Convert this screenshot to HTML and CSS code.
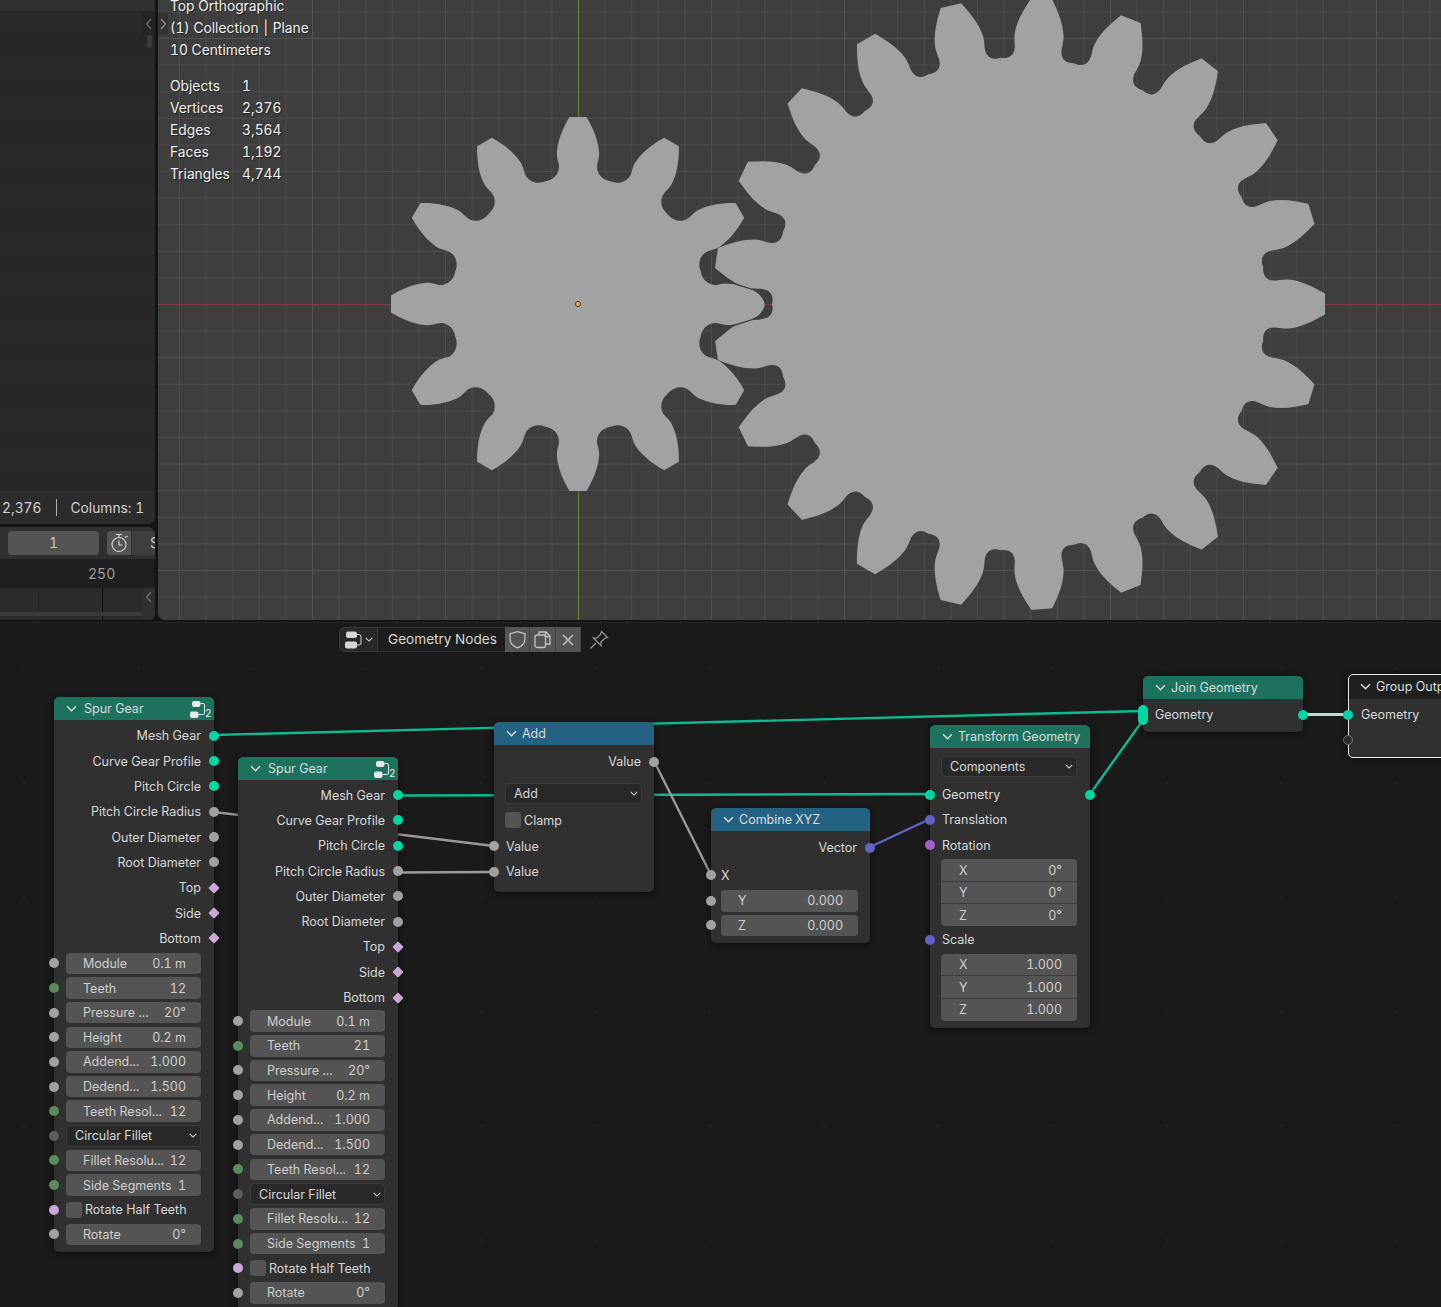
FILE: index.html
```html
<!DOCTYPE html>
<html lang="en">
<head>
    <meta charset="UTF-8">
    <title>Geometry Nodes</title>
    <link rel="stylesheet" href="styles.css">
</head>
<body>
    <svg class="defs" width="0" height="0">
        <symbol id="i-chev" viewBox="0 0 10 6"><polyline points="1,1 5,5 9,1" fill="none" stroke="currentColor" stroke-width="1.3"/></symbol>
        <symbol id="i-group" viewBox="0 0 17 18">
            <rect x="2" y="1" width="8.5" height="6" rx="2" fill="currentColor"/>
            <rect x="0" y="11.5" width="8.5" height="6.5" rx="2" fill="currentColor"/>
            <path d="M10.5 3.5H13Q14.5 3.5 14.5 5V13Q14.5 14.5 13 14.5H8.5" fill="none" stroke="currentColor" stroke-width="1"/>
        </symbol>
        <symbol id="i-editor" viewBox="0 0 17 18">
            <rect x="1" y="0.5" width="11" height="6.5" rx="2" fill="currentColor"/>
            <rect x="0" y="10.5" width="12" height="7" rx="2" fill="currentColor"/>
            <path d="M12 3.5H14Q16 3.5 16 6V12Q16 14 14 14H12" fill="none" stroke="currentColor" stroke-width="1"/>
        </symbol>
    </svg>

    <div class="top-area">
        <div class="left-col">
            <div class="sheet">
                <div class="sheet-head"></div>
                <div class="sheet-rows"></div>
                <div class="sheet-foot">
                    <span>2,376</span>
                    <span class="sheet-sep"></span>
                    <span>Columns: 1</span>
                </div>
                <div class="region-toggle">
                    <svg width="8" height="12" viewBox="0 0 8 12"><polyline points="6,1 1.5,6 6,11" fill="none" stroke="currentColor" stroke-width="1.3"/></svg>
                </div>
                <div class="sheet-thumb"></div>
            </div>
            <div class="timeline">
                <div class="tl-head">
                    <div class="tl-frame">1</div>
                    <div class="tl-clock">
                        <svg width="19" height="20" viewBox="0 0 19 20" fill="none" stroke="currentColor" stroke-width="1.2">
                            <circle cx="9" cy="11.5" r="7"/>
                            <path d="M6 1.5h6M9 1.5v3M9 7.5v4.5h3.5M15 4.5l2.5-1.5"/>
                        </svg>
                    </div>
                    <div class="tl-start">S</div>
                </div>
                <div class="tl-ruler"><span class="tl-num">250</span></div>
                <div class="tl-track">
                    <span class="tl-line"></span>
                    <span class="tl-end"></span>
                    <span class="tl-scroll"></span>
                    <span class="tl-toggle">
                        <svg width="8" height="12" viewBox="0 0 8 12"><polyline points="6,1 1.5,6 6,11" fill="none" stroke="currentColor" stroke-width="1.3"/></svg>
                    </span>
                </div>
            </div>
        </div>

        <div class="viewport">
            <svg class="scene" viewBox="158 0 1283 620">
                <defs>
                    <pattern id="grid-minor" width="26.6" height="26.6" x="578" y="304" patternUnits="userSpaceOnUse">
                        <path class="grid-minor" d="M0.5 0V26.6M0 0.5H26.6"/>
                    </pattern>
                    <pattern id="grid-major" width="266" height="266" x="578" y="304" patternUnits="userSpaceOnUse">
                        <path class="grid-major" d="M0.5 0V266M0 0.5H266"/>
                    </pattern>
                    <path id="tooth-s" d="M0 0 L-32.9 -122.7 C-24 -123.5 -17 -132 -19.5 -141 C-21 -146 -21.5 -150 -21 -153 C-20 -165 -14 -178 -8.5 -187 L8.5 -187 C14 -178 20 -165 21 -153 C21.5 -150 21 -146 19.5 -141 C17 -132 24 -123.5 32.9 -122.7 Z"/>
                    <path id="tooth-b" d="M0 0 L-36.9 -244.2 C-29 -243.5 -24 -247 -23.5 -254 C-23 -258 -25 -263 -24.5 -270 C-23 -284 -16 -296 -10.5 -306 L10.5 -306 C16 -296 23 -284 24.5 -270 C25 -263 23 -258 23.5 -254 C24 -247 29 -243.5 36.9 -244.2 Z"/>
                    <path id="seam" d="M715 268 L733 282.5 L753 289 Q768 288 772 305 L765 305 Q763 295 753 290.2 L733 284 L712 283 Z"/>
                </defs>
                <rect x="158" y="0" width="1283" height="620" fill="url(#grid-minor)"/>
                <rect x="158" y="0" width="1283" height="620" fill="url(#grid-major)"/>
                <line class="axis-x" x1="158" y1="304.5" x2="1441" y2="304.5"/>
                <line class="axis-y" x1="578.5" y1="0" x2="578.5" y2="620"/>

                <g class="gear" transform="translate(578 304)">
                    <circle r="124"/>
                    <use href="#tooth-s"/>
                    <use href="#tooth-s" transform="rotate(30)"/>
                    <use href="#tooth-s" transform="rotate(60)"/>
                    <use href="#tooth-s" transform="rotate(90)"/>
                    <use href="#tooth-s" transform="rotate(120)"/>
                    <use href="#tooth-s" transform="rotate(150)"/>
                    <use href="#tooth-s" transform="rotate(180)"/>
                    <use href="#tooth-s" transform="rotate(210)"/>
                    <use href="#tooth-s" transform="rotate(240)"/>
                    <use href="#tooth-s" transform="rotate(270)"/>
                    <use href="#tooth-s" transform="rotate(300)"/>
                    <use href="#tooth-s" transform="rotate(330)"/>
                </g>
                <g class="gear" transform="translate(1019 304) rotate(90)">
                    <circle r="243"/>
                    <use href="#tooth-b"/>
                    <use href="#tooth-b" transform="rotate(17.1429)"/>
                    <use href="#tooth-b" transform="rotate(34.2857)"/>
                    <use href="#tooth-b" transform="rotate(51.4286)"/>
                    <use href="#tooth-b" transform="rotate(68.5714)"/>
                    <use href="#tooth-b" transform="rotate(85.7143)"/>
                    <use href="#tooth-b" transform="rotate(102.857)"/>
                    <use href="#tooth-b" transform="rotate(120)"/>
                    <use href="#tooth-b" transform="rotate(137.143)"/>
                    <use href="#tooth-b" transform="rotate(154.286)"/>
                    <use href="#tooth-b" transform="rotate(171.429)"/>
                    <use href="#tooth-b" transform="rotate(188.571)"/>
                    <use href="#tooth-b" transform="rotate(205.714)"/>
                    <use href="#tooth-b" transform="rotate(222.857)"/>
                    <use href="#tooth-b" transform="rotate(240)"/>
                    <use href="#tooth-b" transform="rotate(257.143)"/>
                    <use href="#tooth-b" transform="rotate(274.286)"/>
                    <use href="#tooth-b" transform="rotate(291.429)"/>
                    <use href="#tooth-b" transform="rotate(308.571)"/>
                    <use href="#tooth-b" transform="rotate(325.714)"/>
                    <use href="#tooth-b" transform="rotate(342.857)"/>
                </g>
                <use class="gear-seam" href="#seam"/>
                <use class="gear-seam" href="#seam" transform="matrix(1 0 0 -1 0 609)"/>
                <line class="axis-x" x1="765" y1="304.5" x2="772" y2="304.5"/>
                <circle class="origin" cx="578" cy="304" r="2.6"/>
            </svg>

            <div class="overlay">
                <div>Top Orthographic</div>
                <div>(1) Collection <span class="pipe">|</span> Plane</div>
                <div>10 Centimeters</div>
                <div class="stats">
                    <span>Objects</span><span>1</span>
                    <span>Vertices</span><span>2,376</span>
                    <span>Edges</span><span>3,564</span>
                    <span>Faces</span><span>1,192</span>
                    <span>Triangles</span><span>4,744</span>
                </div>
            </div>
            <div class="vp-toggle">
                <svg width="8" height="12" viewBox="0 0 8 12"><polyline points="2,1 6.5,6 2,11" fill="none" stroke="currentColor" stroke-width="1.3"/></svg>
            </div>
        </div>
    </div>

    <div class="editor">
        <svg class="wires" viewBox="0 622 1441 685">
            <defs>
                <pattern id="dots" width="114.3" height="114.3" x="1166" y="782" patternUnits="userSpaceOnUse">
                    <rect class="dot" width="2" height="2"/>
                </pattern>
            </defs>
            <rect x="0" y="622" width="1441" height="685" fill="url(#dots)"/>
            <line class="wire w-geo" x1="214" y1="735" x2="1143" y2="711"/>
            <line class="wire w-geo" x1="398" y1="795.5" x2="930" y2="794"/>
            <line class="wire w-geo" x1="1090" y1="794" x2="1143" y2="720"/>
            <line class="wire w-sel" x1="1303" y1="714.5" x2="1348" y2="714.5"/>
            <line class="wire w-val" x1="214" y1="812" x2="494" y2="846"/>
            <line class="wire w-val" x1="398" y1="872.5" x2="494" y2="872"/>
            <line class="wire w-val" x1="654" y1="761" x2="711" y2="875"/>
            <line class="wire w-vec" x1="870" y1="847" x2="930" y2="819"/>
        </svg>

        <div class="editor-head">
            <div class="hd-type">
                <svg class="hd-icon"><use href="#i-editor"/></svg>
                <svg class="chev-sm"><use href="#i-chev"/></svg>
            </div>
            <div class="hd-name">Geometry Nodes</div>
            <div class="hd-btn">
                <svg width="19" height="19" viewBox="0 0 18 18" fill="none" stroke="currentColor" stroke-width="1.2"><path d="M9 1.5 L16 3.5 V9 C16 13 12.5 15.5 9 17 C5.5 15.5 2 13 2 9 V3.5 Z"/></svg>
            </div>
            <div class="hd-btn">
                <svg width="19" height="19" viewBox="0 0 19 19" fill="none" stroke="currentColor" stroke-width="1.3"><path d="M6 4.5 V2 H13 L17 6 V14 H12.5"/><path d="M12.5 2 V6.5 H17"/><rect x="2" y="5" width="10.5" height="12.5" rx="2"/></svg>
            </div>
            <div class="hd-btn">
                <svg width="14" height="14" viewBox="0 0 14 14" stroke="currentColor" stroke-width="1.5"><path d="M2 2 L12 12 M12 2 L2 12"/></svg>
            </div>
            <div class="hd-pin">
                <svg width="20" height="20" viewBox="0 0 20 20" fill="none" stroke="currentColor" stroke-width="1.2"><path d="M1.5 18.5 L7 13"/><path d="M12.5 1.5 L18.5 7.5 L15.5 8.5 L12 12 L12 15.5 L4.5 8 L8 8 L11.5 4.5 Z"/></svg>
            </div>
        </div>

        <div class="node node-spur-a">
            <div class="node-title geo">
                <svg class="chev"><use href="#i-chev"/></svg>
                <span class="spur-name">Spur Gear</span>
                <span class="group-badge"><svg class="badge-icon"><use href="#i-group"/></svg><b>2</b></span>
            </div>
            <div class="node-body">
                <div class="row out">Mesh Gear<i class="sock right teal"></i></div>
                <div class="row out">Curve Gear Profile<i class="sock right teal"></i></div>
                <div class="row out">Pitch Circle<i class="sock right teal"></i></div>
                <div class="row out">Pitch Circle Radius<i class="sock right grey"></i></div>
                <div class="row out">Outer Diameter<i class="sock right grey"></i></div>
                <div class="row out">Root Diameter<i class="sock right grey"></i></div>
                <div class="row out">Top<i class="sock right dia"></i></div>
                <div class="row out">Side<i class="sock right dia"></i></div>
                <div class="row out">Bottom<i class="sock right dia"></i></div>
                <div class="row inp"><i class="sock left grey"></i><div class="field"><span>Module</span><span>0.1 m</span></div></div>
                <div class="row inp"><i class="sock left green"></i><div class="field"><span>Teeth</span><span>12</span></div></div>
                <div class="row inp"><i class="sock left grey"></i><div class="field"><span>Pressure ...</span><span>20°</span></div></div>
                <div class="row inp"><i class="sock left grey"></i><div class="field"><span>Height</span><span>0.2 m</span></div></div>
                <div class="row inp"><i class="sock left grey"></i><div class="field"><span>Addend...</span><span>1.000</span></div></div>
                <div class="row inp"><i class="sock left grey"></i><div class="field"><span>Dedend...</span><span>1.500</span></div></div>
                <div class="row inp"><i class="sock left green"></i><div class="field"><span>Teeth Resol...</span><span>12</span></div></div>
                <div class="row inp"><i class="sock left dark"></i><div class="select"><span>Circular Fillet</span><svg class="chev-sm"><use href="#i-chev"/></svg></div></div>
                <div class="row inp"><i class="sock left green"></i><div class="field"><span>Fillet Resolu...</span><span>12</span></div></div>
                <div class="row inp"><i class="sock left green"></i><div class="field"><span>Side Segments</span><span>1</span></div></div>
                <div class="row inp"><i class="sock left pink"></i><div class="check"><span class="box"></span><span>Rotate Half Teeth</span></div></div>
                <div class="row inp"><i class="sock left grey"></i><div class="field"><span>Rotate</span><span>0°</span></div></div>
            </div>
        </div>

        <div class="node node-spur-b">
            <div class="node-title geo">
                <svg class="chev"><use href="#i-chev"/></svg>
                <span class="spur-name">Spur Gear</span>
                <span class="group-badge"><svg class="badge-icon"><use href="#i-group"/></svg><b>2</b></span>
            </div>
            <div class="node-body">
                <div class="row out">Mesh Gear<i class="sock right teal"></i></div>
                <div class="row out">Curve Gear Profile<i class="sock right teal"></i></div>
                <div class="row out">Pitch Circle<i class="sock right teal"></i></div>
                <div class="row out">Pitch Circle Radius<i class="sock right grey"></i></div>
                <div class="row out">Outer Diameter<i class="sock right grey"></i></div>
                <div class="row out">Root Diameter<i class="sock right grey"></i></div>
                <div class="row out">Top<i class="sock right dia"></i></div>
                <div class="row out">Side<i class="sock right dia"></i></div>
                <div class="row out">Bottom<i class="sock right dia"></i></div>
                <div class="row inp"><i class="sock left grey"></i><div class="field"><span>Module</span><span>0.1 m</span></div></div>
                <div class="row inp"><i class="sock left green"></i><div class="field"><span>Teeth</span><span>21</span></div></div>
                <div class="row inp"><i class="sock left grey"></i><div class="field"><span>Pressure ...</span><span>20°</span></div></div>
                <div class="row inp"><i class="sock left grey"></i><div class="field"><span>Height</span><span>0.2 m</span></div></div>
                <div class="row inp"><i class="sock left grey"></i><div class="field"><span>Addend...</span><span>1.000</span></div></div>
                <div class="row inp"><i class="sock left grey"></i><div class="field"><span>Dedend...</span><span>1.500</span></div></div>
                <div class="row inp"><i class="sock left green"></i><div class="field"><span>Teeth Resol...</span><span>12</span></div></div>
                <div class="row inp"><i class="sock left dark"></i><div class="select"><span>Circular Fillet</span><svg class="chev-sm"><use href="#i-chev"/></svg></div></div>
                <div class="row inp"><i class="sock left green"></i><div class="field"><span>Fillet Resolu...</span><span>12</span></div></div>
                <div class="row inp"><i class="sock left green"></i><div class="field"><span>Side Segments</span><span>1</span></div></div>
                <div class="row inp"><i class="sock left pink"></i><div class="check"><span class="box"></span><span>Rotate Half Teeth</span></div></div>
                <div class="row inp"><i class="sock left grey"></i><div class="field"><span>Rotate</span><span>0°</span></div></div>
            </div>
        </div>

        <div class="node node-add">
            <div class="node-title math">
                <svg class="chev"><use href="#i-chev"/></svg>
                <span>Add</span>
            </div>
            <div class="node-body">
                <div class="row out">Value<i class="sock right grey"></i></div>
                <div class="row-select gap-6"><div class="select"><span>Add</span><svg class="chev-sm"><use href="#i-chev"/></svg></div></div>
                <div class="row-check"><div class="check"><span class="box"></span><span>Clamp</span></div></div>
                <div class="row in">Value<i class="sock left grey"></i></div>
                <div class="row in">Value<i class="sock left grey"></i></div>
            </div>
        </div>

        <div class="node node-combine">
            <div class="node-title math">
                <svg class="chev"><use href="#i-chev"/></svg>
                <span>Combine XYZ</span>
            </div>
            <div class="node-body">
                <div class="row out">Vector<i class="sock right blue"></i></div>
                <div class="row in gap-2">X<i class="sock left grey"></i></div>
                <div class="row inp"><i class="sock left grey"></i><div class="field"><span>Y</span><span>0.000</span></div></div>
                <div class="row inp"><i class="sock left grey"></i><div class="field"><span>Z</span><span>0.000</span></div></div>
            </div>
        </div>

        <div class="node node-transform">
            <div class="node-title geo">
                <svg class="chev"><use href="#i-chev"/></svg>
                <span>Transform Geometry</span>
            </div>
            <div class="node-body">
                <div class="row-select"><div class="select"><span>Components</span><svg class="chev-sm"><use href="#i-chev"/></svg></div></div>
                <div class="row in gap-2">Geometry<i class="sock left teal"></i><i class="sock right teal"></i></div>
                <div class="row in">Translation<i class="sock left blue"></i></div>
                <div class="row in">Rotation<i class="sock left purple"></i></div>
                <div class="vec">
                    <div class="vec-item"><span>X</span><span>0°</span></div>
                    <div class="vec-item"><span>Y</span><span>0°</span></div>
                    <div class="vec-item"><span>Z</span><span>0°</span></div>
                </div>
                <div class="row in">Scale<i class="sock left blue"></i></div>
                <div class="vec">
                    <div class="vec-item"><span>X</span><span>1.000</span></div>
                    <div class="vec-item"><span>Y</span><span>1.000</span></div>
                    <div class="vec-item"><span>Z</span><span>1.000</span></div>
                </div>
            </div>
        </div>

        <div class="node node-join">
            <div class="node-title geo">
                <svg class="chev"><use href="#i-chev"/></svg>
                <span>Join Geometry</span>
            </div>
            <div class="node-body">
                <div class="row in">Geometry<i class="sock left multi"></i><i class="sock right teal"></i></div>
            </div>
        </div>

        <div class="node node-output">
            <div class="node-title dim">
                <svg class="chev"><use href="#i-chev"/></svg>
                <span>Group Output</span>
            </div>
            <div class="node-body">
                <div class="row in">Geometry<i class="sock left teal"></i></div>
                <div class="row in"><i class="sock left empty"></i></div>
            </div>
        </div>
    </div>
</body>
</html>
```

FILE: styles.css
```css
* {
    box-sizing: border-box;
}
html, body {
    margin: 0;
    height: 100%;
}
body {
    width: 1441px;
    height: 1307px;
    overflow: hidden;
    display: flex;
    flex-direction: column;
    background-color: #141414;
    color: #d8d8d8;
    font-family: Inter, "Noto Sans", sans-serif;
    font-size: 12.5px;
    font-variant-numeric: tabular-nums;
}
.defs {
    position: absolute;
}

/* top half */
.top-area {
    height: 620px;
    display: flex;
    gap: 3px;
}
.left-col {
    width: 155px;
    display: flex;
    flex-direction: column;
    gap: 3px;
}
.sheet {
    position: relative;
    height: 524px;
    display: flex;
    flex-direction: column;
    background-color: #2a2a2a;
    border-bottom-right-radius: 7px;
    overflow: hidden;
}
.sheet-head {
    height: 12px;
    background-color: #2f2f2f;
    border-bottom: 1px solid #222;
}
.sheet-rows {
    flex: 1;
    background: repeating-linear-gradient(to bottom, #292929 0, #292929 22px, #272727 22px, #272727 44px);
}
.sheet-foot {
    height: 33px;
    display: flex;
    align-items: center;
    padding-left: 2px;
    background-color: #2c2c2c;
    color: #d2d2d2;
    font-size: 13.8px;
}
.sheet-sep {
    width: 1px;
    height: 17px;
    margin: 0 14px 0 14px;
    background-color: #b0b0b0;
}
.region-toggle {
    position: absolute;
    top: 12px;
    right: 0;
    width: 13px;
    height: 23px;
    display: flex;
    align-items: center;
    justify-content: center;
    background-color: #242424;
    color: #6c6c6c;
}
.sheet-thumb {
    position: absolute;
    top: 35px;
    right: 3px;
    width: 5px;
    height: 13px;
    border-radius: 2px;
    background-color: #3a3a3a;
}
.timeline {
    flex: 1;
    display: flex;
    flex-direction: column;
    border-top-right-radius: 7px;
    border-bottom-right-radius: 5px;
    overflow: hidden;
}
.tl-head {
    height: 32px;
    display: flex;
    align-items: center;
    background-color: #303030;
    color: #c8c8c8;
    font-size: 14px;
}
.tl-frame {
    width: 91px;
    height: 24px;
    margin-left: 8px;
    line-height: 24px;
    text-align: center;
    background-color: #545454;
    border-radius: 4px;
}
.tl-clock {
    width: 24px;
    height: 24px;
    margin-left: 8px;
    display: flex;
    align-items: center;
    justify-content: center;
    background-color: #545454;
    border-radius: 4px 0 0 4px;
    color: #d0d0d0;
}
.tl-start {
    flex: 1;
    height: 24px;
    margin-left: 1px;
    padding-left: 18px;
    line-height: 24px;
    background-color: #3e3e3e;
    overflow: hidden;
}
.tl-ruler {
    height: 29px;
    position: relative;
    background-color: #1f1f1f;
    color: #9c9c9c;
    font-size: 14px;
}
.tl-num {
    position: absolute;
    left: 88px;
    top: 6px;
}
.tl-track {
    flex: 1;
    position: relative;
    background-color: #2b2b2b;
}
.tl-line {
    position: absolute;
    left: 102px;
    top: 0;
    bottom: 0;
    width: 1px;
    background-color: #0d0d0d;
}
.tl-end {
    position: absolute;
    left: 38px;
    top: 0;
    bottom: 0;
    width: 1px;
    background-color: #232323;
}
.tl-scroll {
    position: absolute;
    left: 0;
    right: 12px;
    bottom: 4px;
    height: 4px;
    background-color: #3a3a3a;
}
.tl-toggle {
    position: absolute;
    right: 0;
    top: 0;
    bottom: 0;
    width: 13px;
    padding-top: 3px;
    text-align: center;
    background-color: #2f2f2f;
    color: #707070;
}
.viewport {
    flex: 1;
    position: relative;
    background-color: #3e3e3e;
    border-bottom-left-radius: 7px;
    overflow: hidden;
    color: #f0f0f0;
    font-size: 13.8px;
    text-shadow: 1px 1px 1px rgba(0, 0, 0, 0.5);
}
.scene {
    position: absolute;
    inset: 0;
    width: 100%;
    height: 100%;
}
.grid-minor {
    fill: none;
    stroke: #4c4c4c;
    stroke-width: 1;
}
.grid-major {
    fill: none;
    stroke: #525252;
    stroke-width: 1;
}
.axis-x {
    stroke: #7d3c46;
    stroke-width: 1;
}
.axis-y {
    stroke: #628a35;
    stroke-width: 1;
}
.gear {
    fill: #a1a2a4;
}
.gear-seam {
    fill: #3e3e3e;
}
.origin {
    fill: #f3a63e;
    stroke: #2c2c2c;
    stroke-width: 0.8;
}
.overlay {
    position: relative;
    margin: -5px 0 0 12px;
    line-height: 22px;
}
.pipe {
    margin: 0 1px;
}
.stats {
    display: grid;
    grid-template-columns: 72px auto;
    justify-content: start;
    margin-top: 14px;
}
.vp-toggle {
    position: absolute;
    top: 12px;
    left: 0;
    width: 10px;
    height: 23px;
    display: flex;
    align-items: center;
    justify-content: center;
    background-color: rgba(40, 40, 40, 0.5);
    color: #8a8a8a;
}

/* node editor */
.editor {
    flex: 1;
    position: relative;
    margin-top: 2px;
    background-color: #1a1a1a;
    border-top: 1px solid #262626;
    overflow: hidden;
}
.wires {
    position: absolute;
    left: 0;
    top: -1px;
    width: 1441px;
    height: 685px;
}
.dot {
    fill: #232323;
}
.wire {
    stroke-width: 2.4;
}
.w-geo {
    stroke: #0dbb92;
}
.w-val {
    stroke: #9a9a9a;
}
.w-vec {
    stroke: #6363c7;
}
.w-sel {
    stroke: #bcdcd3;
    stroke-width: 3;
}
.editor-head {
    position: relative;
    height: 25px;
    display: flex;
    align-items: center;
    margin: 4px 0 0 339px;
    color: #d6d6d6;
    font-size: 13.6px;
}
.hd-type {
    width: 39px;
    height: 25px;
    display: flex;
    align-items: center;
    gap: 3px;
    padding-left: 5px;
    background-color: #282828;
    border: 1px solid #3a3a3a;
    border-radius: 6px 0 0 6px;
}
.hd-icon {
    width: 17px;
    height: 18px;
    flex: none;
    color: #d6d6d6;
}
.hd-name {
    width: 127px;
    height: 25px;
    padding-left: 10px;
    line-height: 22px;
    background-color: #1d1d1d;
    border: 1px solid #333;
    border-width: 1px 0;
}
.hd-btn {
    width: 25.3px;
    height: 25px;
    display: flex;
    align-items: center;
    justify-content: center;
    background-color: #545454;
    border-right: 1px solid #444;
    color: #c4c4c4;
}
.hd-btn:last-of-type {
    border-radius: 0 6px 6px 0;
    border-right: none;
}
.hd-pin {
    margin-left: 8px;
    display: flex;
    color: #9a9a9a;
}
.chev {
    width: 11px;
    height: 7px;
    flex: none;
}
.chev-sm {
    width: 8px;
    height: 5px;
    flex: none;
}

.node {
    position: absolute;
    width: 160px;
    border-radius: 5px;
    background-color: #303030;
    box-shadow: 0 2px 8px rgba(0, 0, 0, 0.55);
}
.node-spur-a {
    left: 54px;
    top: 74px;
}
.node-spur-b {
    left: 238px;
    top: 134px;
}
.node-add {
    left: 494px;
    top: 99px;
}
.node-combine {
    left: 711px;
    top: 185px;
    width: 159px;
}
.node-transform {
    left: 930px;
    top: 102px;
}
.node-join {
    left: 1143px;
    top: 53px;
}
.node-output {
    left: 1348px;
    top: 51px;
    width: 180px;
    outline: 1.5px solid #e6e6e6;
    outline-offset: -1px;
}
.node-title {
    height: 23px;
    display: flex;
    align-items: center;
    gap: 5px;
    padding-left: 12px;
    border-radius: 5px 5px 0 0;
    color: #dcdcdc;
    white-space: nowrap;
}
.geo {
    background-color: #1d725e;
}
.math {
    background-color: #246283;
}
.dim {
    background-color: #1f1f1f;
    height: 25px;
}
.spur-name {
    margin-left: 2px;
}
.group-badge {
    margin-left: auto;
    position: relative;
    width: 24px;
    height: 21px;
}
.badge-icon {
    position: absolute;
    left: 0;
    top: 2px;
    width: 17px;
    height: 18px;
    color: #e8e8e8;
}
.group-badge b {
    position: absolute;
    left: 15px;
    top: 9px;
    font-size: 10px;
    line-height: 12px;
    font-weight: 400;
    color: #eeeeee;
}
.node-body {
    padding: 2px 0 5px;
}
.node-spur-a .node-body {
    padding-top: 3px;
}
.node-spur-b .node-body {
    padding-top: 2.5px;
}
.node-add .node-body {
    padding: 4px 0 7.5px;
}
.node-combine .node-body {
    padding-top: 4px;
}
.node-transform .node-body {
    padding-bottom: 6px;
}
.node-join .node-body {
    padding: 3px 0 4px;
}
.node-output .node-body {
    padding-top: 3px;
}
.row {
    position: relative;
    height: 25.5px;
    display: flex;
    align-items: center;
    white-space: nowrap;
}
.row.out {
    justify-content: flex-end;
    padding-right: 13px;
}
.node-spur-a .row.out {
    height: 25.35px;
}
.node-spur-b .row.out {
    height: 25.3px;
}
.node-transform .row {
    height: 25.3px;
}
.row.in {
    padding-left: 12px;
}
.node-combine .row.in {
    padding-left: 10px;
}
.node-output .row.in {
    padding-left: 13px;
}
.row.inp {
    height: 24.63px;
    padding: 0 13px 0 12px;
}
.node-spur-b .row.inp {
    height: 24.73px;
}
.node-spur-b .row.out + .row.inp {
    margin-top: -1.5px;
}
.node-combine .row.inp {
    padding: 0 12px 0 10px;
}
.node-combine .gap-2 + .row.inp {
    margin-top: 0.5px;
}
.gap-2 {
    margin-top: 2px;
}
.gap-6 {
    margin-top: 6px;
}
.row-select {
    height: 26px;
    display: flex;
    align-items: center;
    padding: 0 12px 0 11px;
}
.node-transform .row-select {
    padding: 3px 13px 0 11px;
    height: 30px;
}
.row-check {
    height: 27px;
    display: flex;
    align-items: center;
    padding-left: 11px;
}
.field, .select, .check {
    flex: 1;
    display: flex;
    align-items: center;
    height: 21.5px;
    white-space: nowrap;
}
.field {
    justify-content: space-between;
    padding: 0 15px 0 17px;
    background-color: #545454;
    border-radius: 4px;
    color: #cfcfcf;
}
.select {
    justify-content: space-between;
    padding: 0 3px 0 8px;
    background-color: #282828;
    border: 1px solid #3a3a3a;
    border-radius: 4px;
}
.check {
    gap: 3px;
}
.box {
    width: 16px;
    height: 16px;
    background-color: #545454;
    border-radius: 3px;
}
.vec {
    margin: 1.5px 13px 1px 11px;
    border-radius: 4px;
    overflow: hidden;
    color: #cfcfcf;
}
.vec-item {
    height: 22.3px;
    display: flex;
    align-items: center;
    justify-content: space-between;
    padding: 0 15px 0 18px;
    background-color: #545454;
    border-bottom: 1px solid #3c3c3c;
}
.vec-item:last-child {
    border-bottom: none;
}

/* sockets */
.sock {
    position: absolute;
    top: 50%;
    width: 10px;
    height: 10px;
    margin-top: -5px;
    border-radius: 50%;
}
.sock.right {
    right: -5px;
}
.sock.left {
    left: -5px;
}
.teal {
    background-color: #00d6a3;
}
.grey {
    background-color: #a1a1a1;
}
.green {
    background-color: #598c5c;
}
.dark {
    background-color: #5c5c5c;
}
.pink {
    background-color: #cca6d6;
}
.blue {
    background-color: #6363c7;
}
.purple {
    background-color: #a35fcc;
}
.sock.dia {
    width: 8px;
    height: 8px;
    margin-top: -4px;
    right: -4px;
    border-radius: 1px;
    background-color: #cca6d6;
    transform: rotate(45deg);
}
.sock.multi {
    height: 20px;
    margin-top: -10px;
    border-radius: 5px;
    background-color: #00d6a3;
}
.sock.empty {
    background-color: #2a2a2a;
    border: 1px solid #6e6e6e;
}
```
